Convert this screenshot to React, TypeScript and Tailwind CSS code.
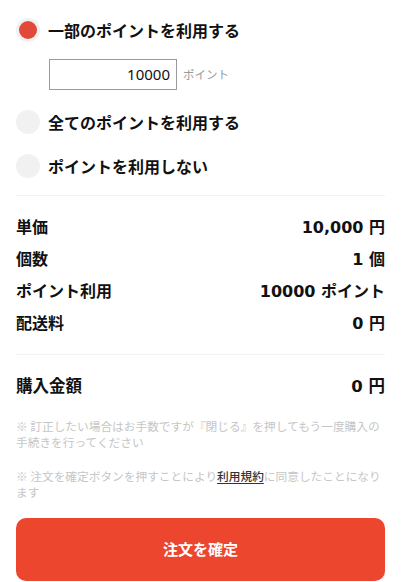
import React from "react";

const jp = { fontFamily: '"Noto Sans CJK JP", "Noto Sans", sans-serif' };
const num = { fontFamily: '"DejaVu Sans", "Noto Sans CJK JP", sans-serif' };

function Radio({ checked, label }: { checked?: boolean; label: string }) {
  return (
    <div className="flex h-[44px] items-center gap-2">
      <div className="flex h-6 w-6 items-center justify-center rounded-full bg-[#f1f1f1]">
        {checked && <div className="h-[18px] w-[18px] rounded-full bg-[#e14a38]" />}
      </div>
      <span className="text-[16px] font-bold leading-none text-[#111]">{label}</span>
    </div>
  );
}

function Row({ label, value, size = "text-[16px]" }: { label: string; value: string; size?: string }) {
  return (
    <div className="flex h-8 items-center">
      <div className="flex w-full items-baseline justify-between">
        <span className={`${size} font-bold leading-5 text-[#111]`}>{label}</span>
        <span className={`${size} font-bold leading-5 text-[#111]`} style={num}>
          {value}
        </span>
      </div>
    </div>
  );
}

export default function App() {
  return (
    <div className="h-[582px] w-[401px] overflow-hidden bg-white px-4 pt-2" style={jp}>
      <Radio checked label="一部のポイントを利用する" />
      <div className="mt-[7px] flex items-center gap-[6px] pl-[33px]">
        <div className="flex h-[31px] w-[128px] items-center justify-end border border-[#9a9a9a] px-[6px]">
          <span className="text-[15px] text-[#111]" style={{ fontFamily: '"Noto Sans", sans-serif' }}>
            10000
          </span>
        </div>
        <span className="text-[11.5px] text-[#9a9a9a]">ポイント</span>
      </div>
      <div className="mt-[10px]">
        <Radio label="全てのポイントを利用する" />
        <Radio label="ポイントを利用しない" />
      </div>
      <div className="mt-[7px] h-px bg-[#f2f2f2]" />
      <div className="py-[15px]">
        <Row label="単価" value="10,000 円" />
        <Row label="個数" value="1 個" />
        <Row label="ポイント利用" value="10000 ポイント" />
        <Row label="配送料" value="0 円" />
      </div>
      <div className="h-px bg-[#f2f2f2]" />
      <div className="mt-[15px]">
        <Row label="購入金額" value="0 円" size="text-[16.5px]" />
      </div>
      <p className="mt-4 text-[11.7px] leading-[16px] text-[#c6c6c6]">
        ※ 訂正したい場合はお手数ですが『閉じる』を押してもう一度購入の手続きを行ってください
      </p>
      <p className="mt-[18px] text-[11.7px] leading-[16px] text-[#c6c6c6]">
        <span className="leading-[16px]">※ 注文を確定ボタンを押すことにより</span>
        <span className="font-medium leading-[16px] text-[#333] underline underline-offset-2">利用規約</span>
        <span className="leading-[16px]">に同意したことになります</span>
      </p>
      <button className="mt-[18px] flex h-[63px] w-full items-center justify-center rounded-[10px] bg-[#ed462e] text-[15px] font-bold text-white">
        注文を確定
      </button>
    </div>
  );
}
